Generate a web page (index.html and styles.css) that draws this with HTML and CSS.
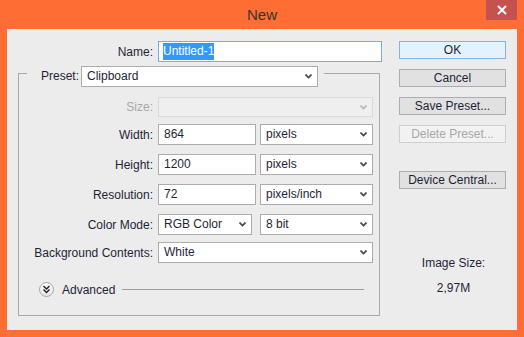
FILE: index.html
```html
<!DOCTYPE html>
<html lang="en">
<head>
    <meta charset="UTF-8">
    <title>New</title>
    <link rel="stylesheet" href="styles.css">
</head>
<body>
    <div class="window">
        <div class="titlebar">
            <span class="title">New</span>
            <div class="close">
                <svg width="10" height="10" viewBox="0 0 10 10"><path d="M1 1 L9 9 M9 1 L1 9" stroke="#fff" stroke-width="2"/></svg>
            </div>
        </div>

        <div class="client">
            <div class="main">
                <div class="name-row">
                    <label>Name:</label>
                    <div class="input focused"><span class="selected">Untitled-1</span></div>
                </div>

                <fieldset class="group">
                    <legend>
                        <label>Preset:</label>
                        <div class="select preset-select">
                            <span>Clipboard</span>
                            <svg class="chev" width="7" height="5" viewBox="0 0 7 5"><path d="M0.5 0.5 L3.5 3.5 L6.5 0.5" fill="none" stroke="#444" stroke-width="1.6"/></svg>
                        </div>
                    </legend>

                    <div class="row row-size">
                        <label class="disabled">Size:</label>
                        <div class="select disabled">
                            <span></span>
                            <svg class="chev" width="7" height="5" viewBox="0 0 7 5"><path d="M0.5 0.5 L3.5 3.5 L6.5 0.5" fill="none" stroke="#b4b4b4" stroke-width="1.6"/></svg>
                        </div>
                    </div>

                    <div class="row">
                        <label>Width:</label>
                        <div class="pair">
                            <div class="input">864</div>
                            <div class="select">
                                <span>pixels</span>
                                <svg class="chev" width="7" height="5" viewBox="0 0 7 5"><path d="M0.5 0.5 L3.5 3.5 L6.5 0.5" fill="none" stroke="#444" stroke-width="1.6"/></svg>
                            </div>
                        </div>
                    </div>

                    <div class="row">
                        <label>Height:</label>
                        <div class="pair">
                            <div class="input">1200</div>
                            <div class="select">
                                <span>pixels</span>
                                <svg class="chev" width="7" height="5" viewBox="0 0 7 5"><path d="M0.5 0.5 L3.5 3.5 L6.5 0.5" fill="none" stroke="#444" stroke-width="1.6"/></svg>
                            </div>
                        </div>
                    </div>

                    <div class="row">
                        <label>Resolution:</label>
                        <div class="pair">
                            <div class="input">72</div>
                            <div class="select">
                                <span>pixels/inch</span>
                                <svg class="chev" width="7" height="5" viewBox="0 0 7 5"><path d="M0.5 0.5 L3.5 3.5 L6.5 0.5" fill="none" stroke="#444" stroke-width="1.6"/></svg>
                            </div>
                        </div>
                    </div>

                    <div class="row">
                        <label>Color Mode:</label>
                        <div class="pair pair-mode">
                            <div class="select">
                                <span>RGB Color</span>
                                <svg class="chev" width="7" height="5" viewBox="0 0 7 5"><path d="M0.5 0.5 L3.5 3.5 L6.5 0.5" fill="none" stroke="#444" stroke-width="1.6"/></svg>
                            </div>
                            <div class="select">
                                <span>8 bit</span>
                                <svg class="chev" width="7" height="5" viewBox="0 0 7 5"><path d="M0.5 0.5 L3.5 3.5 L6.5 0.5" fill="none" stroke="#444" stroke-width="1.6"/></svg>
                            </div>
                        </div>
                    </div>

                    <div class="row row-bg">
                        <label>Background Contents:</label>
                        <div class="select">
                            <span>White</span>
                            <svg class="chev" width="7" height="5" viewBox="0 0 7 5"><path d="M0.5 0.5 L3.5 3.5 L6.5 0.5" fill="none" stroke="#444" stroke-width="1.6"/></svg>
                        </div>
                    </div>

                    <div class="advanced">
                        <div class="adv-btn">
                            <svg width="9" height="9" viewBox="0 0 9 9"><path d="M1.5 1 L4.5 4 L7.5 1 M1.5 4.5 L4.5 7.5 L7.5 4.5" fill="none" stroke="#222" stroke-width="1.4"/></svg>
                        </div>
                        <span>Advanced</span>
                        <div class="adv-line"></div>
                    </div>
                </fieldset>
            </div>

            <div class="side">
                <div class="btn default">OK</div>
                <div class="btn">Cancel</div>
                <div class="btn">Save Preset...</div>
                <div class="btn disabled">Delete Preset...</div>
                <div class="btn device">Device Central...</div>

                <div class="image-size">
                    <div>Image Size:</div>
                    <div class="size-value">2,97M</div>
                </div>
            </div>
        </div>
    </div>
</body>
</html>
```

FILE: styles.css
```css
body {
    margin: 0;
    font-family: "Liberation Sans", Arial, sans-serif;
    font-size: 12px;
    color: #1f1f38;
}
.window {
    width: 524px;
    height: 337px;
    background-color: #fe6d34;
    display: flex;
    flex-direction: column;
}
.titlebar {
    height: 29px;
    display: grid;
    grid-template-columns: 1fr auto 1fr;
    align-items: start;
}
.title {
    grid-column: 2;
    font-size: 15px;
    color: #333;
    line-height: 30px;
}
.close {
    grid-column: 3;
    justify-self: end;
    margin-right: 7px;
    width: 31px;
    height: 20px;
    background-color: #c75050;
    display: flex;
    align-items: center;
    justify-content: center;
}
.client {
    margin: 0 7px;
    height: 301px;
    background-color: #ececec;
    display: grid;
    grid-template-columns: 392px 107px;
}
.main {
    padding: 12px 0 0 11px;
}
label {
    white-space: nowrap;
}
.name-row {
    display: flex;
    align-items: center;
}
.name-row label {
    width: 135px;
    text-align: right;
    margin-right: 5px;
}
.input {
    box-sizing: border-box;
    height: 21px;
    line-height: 19px;
    background-color: #fff;
    border: 1px solid #abadb3;
    padding-left: 5px;
    white-space: nowrap;
}
.name-row .input {
    width: 224px;
    padding-left: 4px;
}
.input.focused {
    border-color: #6faee8;
}
.selected {
    background-color: #3399ff;
    color: #fff;
    padding: 1px 0 2px;
}
.select {
    box-sizing: border-box;
    height: 21px;
    line-height: 19px;
    background-color: #fff;
    border: 1px solid #acacac;
    padding: 0 5px 0 5px;
    display: flex;
    align-items: center;
    justify-content: space-between;
    white-space: nowrap;
}
.select.disabled {
    background-color: #efefef;
    border-color: #d9d9d9;
    height: 20px;
}
.chev {
    flex-shrink: 0;
}
.group {
    margin: 4px 0 0 0;
    padding: 16px 5px 18px 0;
    width: 362px;
    box-sizing: border-box;
    border: 1px solid #a9a9a9;
    min-width: 0;
}
.group legend {
    margin-left: 8px;
    padding: 0 6px 0 14px;
    height: 15px;
    display: flex;
    align-items: flex-start;
}
.group legend label {
    width: 36px;
    text-align: right;
    line-height: 21px;
    margin-right: 4px;
}
.preset-select {
    width: 237px;
}
.row {
    display: grid;
    grid-template-columns: 134px 215px;
    column-gap: 5px;
    align-items: center;
    margin-top: 9px;
}
.row label {
    text-align: right;
}
.row-size {
    margin-top: 0;
    margin-bottom: -2px;
}
.row-bg {
    margin-top: 7px;
}
label.disabled {
    color: #a8a8a8;
}
.pair {
    display: grid;
    grid-template-columns: 98px 113px;
    column-gap: 4px;
}
.pair-mode {
    grid-template-columns: 94px 113px;
    column-gap: 8px;
}
.advanced {
    display: flex;
    align-items: center;
    margin-top: 19px;
    padding: 0 10px 0 20px;
    height: 15px;
}
.adv-btn {
    width: 13px;
    height: 13px;
    border: 1px solid #a6a6a6;
    border-radius: 50%;
    background: linear-gradient(#ffffff, #e4e4e4);
    display: flex;
    align-items: center;
    justify-content: center;
    margin-right: 8px;
}
.adv-line {
    flex: 1;
    height: 1px;
    background-color: #9d9d9d;
    margin-left: 7px;
}
.side {
    padding-top: 12px;
    display: flex;
    flex-direction: column;
}
.btn {
    box-sizing: border-box;
    height: 18px;
    line-height: 16px;
    text-align: center;
    background-color: #e1e1e1;
    border: 1px solid #adadad;
    margin-bottom: 10px;
}
.btn.default {
    background-color: #e5f1fb;
    border-color: #7eb4ea;
}
.btn.disabled {
    background-color: #f2f2f2;
    border-color: #cfcfcf;
    color: #a8a8a8;
}
.btn.device {
    margin-top: 18px;
}
.image-size {
    margin-top: 57px;
    text-align: center;
    padding-left: 2px;
    line-height: 15px;
}
.size-value {
    margin-top: 10px;
}
```
